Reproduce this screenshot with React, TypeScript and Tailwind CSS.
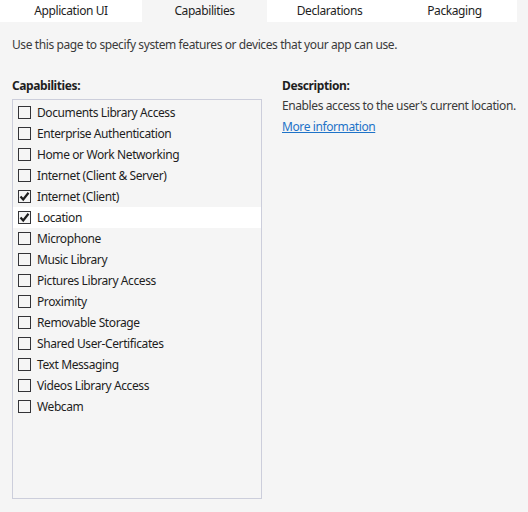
const tabs = [
  { name: "Application UI", w: "w-[142px]" },
  { name: "Capabilities", w: "w-[125px]", active: true },
  { name: "Declarations", w: "w-[125px]" },
  { name: "Packaging", w: "w-[125px]" },
];

const capabilities = [
  { name: "Documents Library Access" },
  { name: "Enterprise Authentication" },
  { name: "Home or Work Networking" },
  { name: "Internet (Client & Server)" },
  { name: "Internet (Client)", checked: true },
  { name: "Location", checked: true, selected: true },
  { name: "Microphone" },
  { name: "Music Library" },
  { name: "Pictures Library Access" },
  { name: "Proximity" },
  { name: "Removable Storage" },
  { name: "Shared User-Certificates" },
  { name: "Text Messaging" },
  { name: "Videos Library Access" },
  { name: "Webcam" },
];

function CheckMark() {
  return (
    <svg width="11" height="11" viewBox="0 0 11 11" className="text-[#1e1e1e]">
      <path d="M1.5 5.5 L4.2 8.5 L9.5 1.8" fill="none" stroke="currentColor" strokeWidth="2.2" />
    </svg>
  );
}

export default function App() {
  return (
    <div className="h-[512px] w-[528px] bg-[#f5f5f5] text-[12px] tracking-[-0.4px] text-[#1e1e1e] [font-family:'Noto_Sans',sans-serif]">
      {/* Tabs */}
      <div className="flex h-[22px] bg-white">
        {tabs.map((tab) => (
          <div
            key={tab.name}
            className={`${tab.w} flex items-center justify-center ${tab.active ? "bg-[#f5f5f5]" : "bg-white"}`}
          >
            {tab.name}
          </div>
        ))}
        <div className="flex-1 bg-[#f5f5f5]" />
      </div>

      <p className="mt-[15px] pl-[12px] leading-[16px] text-[#3a3a3a]">
        Use this page to specify system features or devices that your app can use.
      </p>

      <div className="mt-[25px] flex pl-[12px]">
        {/* Capability list */}
        <div className="w-[250px] shrink-0">
          <div className="h-[21px] font-bold leading-[16px]">Capabilities:</div>
          <div className="h-[400px] border border-[#cccedb] pt-[2px]">
            {capabilities.map((c) => (
              <div
                key={c.name}
                className={`flex h-[21px] items-center gap-[6px] pl-[5px] ${c.selected ? "bg-white" : ""}`}
              >
                <div className="flex h-[13px] w-[13px] items-center justify-center border border-[#333337] bg-[#f5f5f5]">
                  {c.checked && <CheckMark />}
                </div>
                <span className="leading-[16px]">{c.name}</span>
              </div>
            ))}
          </div>
        </div>

        {/* Description */}
        <div className="ml-[20px] flex flex-col whitespace-nowrap">
          <div className="h-[20px] font-bold leading-[16px]">Description:</div>
          <div className="h-[21px] leading-[16px] text-[#3a3a3a]">Enables access to the user's current location.</div>
          <a href="#" className="self-start leading-[16px] text-[#1e73c8] underline">
            More information
          </a>
        </div>
      </div>
    </div>
  );
}
